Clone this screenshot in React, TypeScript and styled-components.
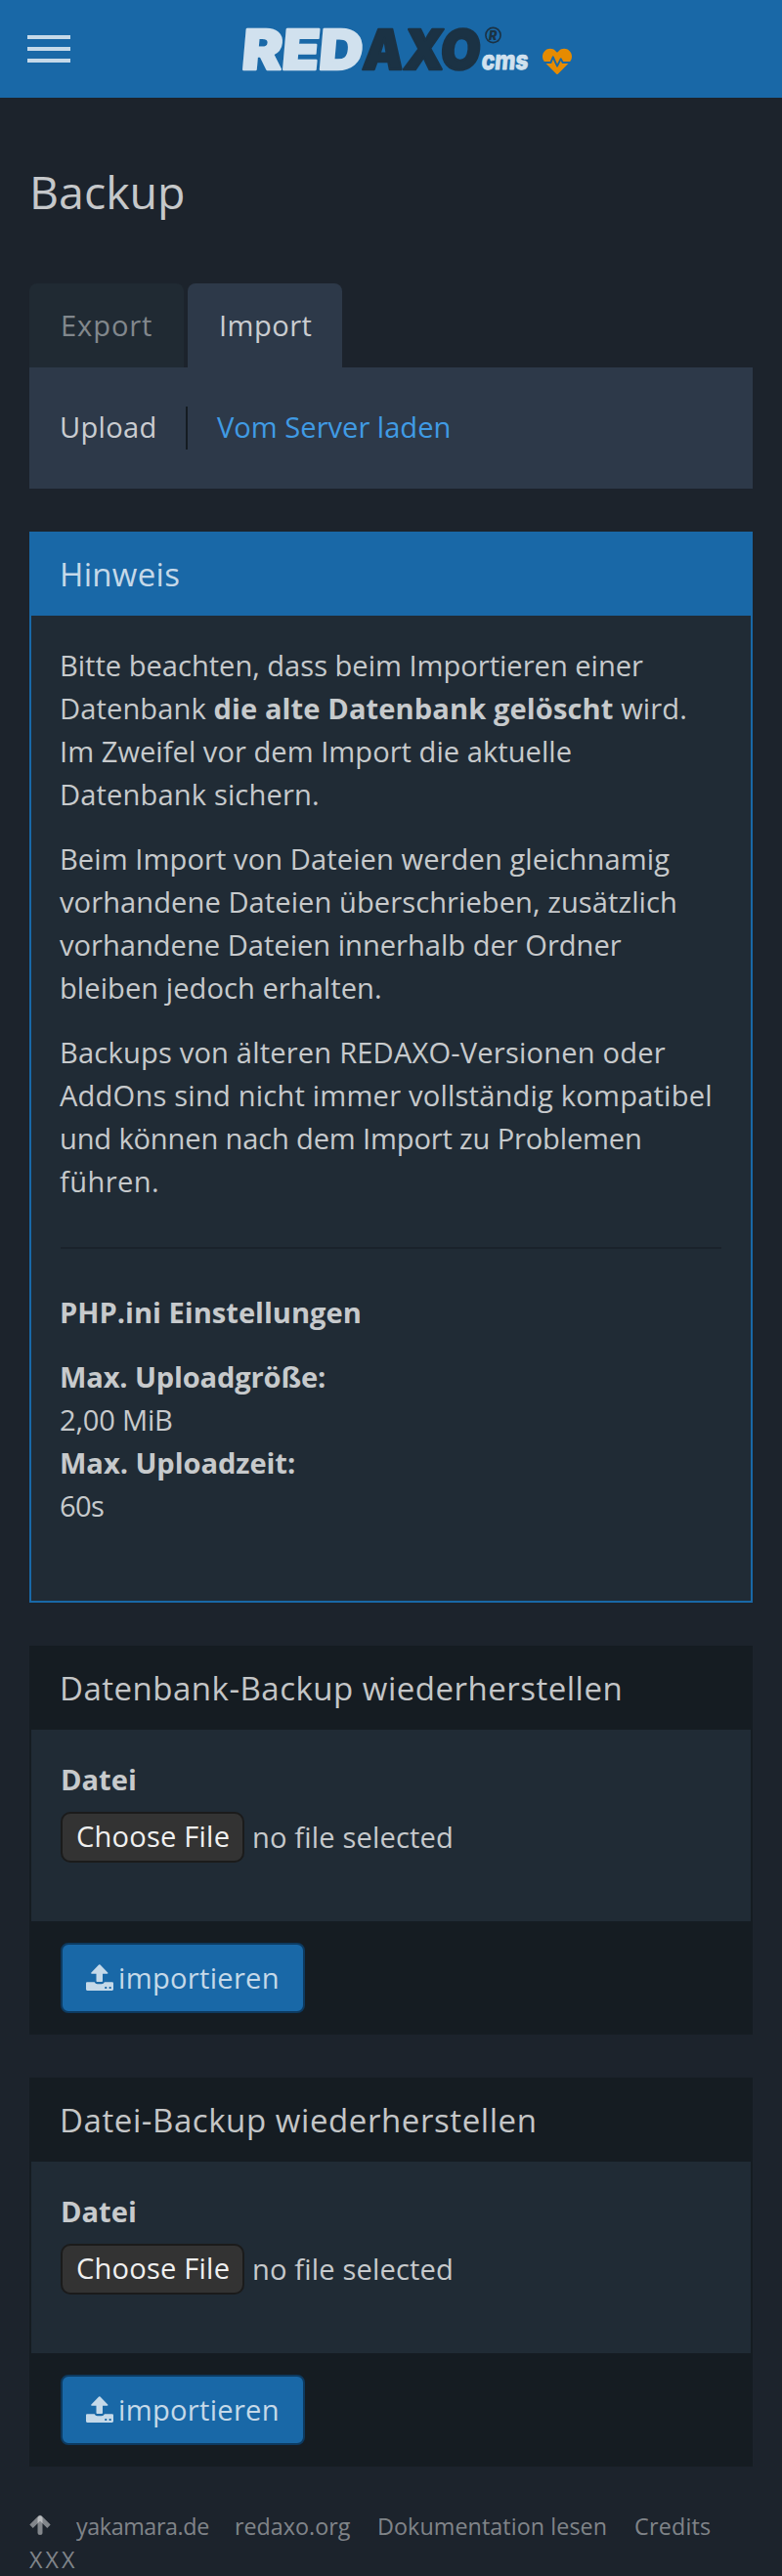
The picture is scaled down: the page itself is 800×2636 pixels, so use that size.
import React from "react";
import styled, { createGlobalStyle } from "styled-components";
import { FaHeartbeat } from "react-icons/fa";

const blue = "#1968a7";
const text = "rgba(255, 255, 255, 0.75)";

const GlobalStyle = createGlobalStyle`
  * { box-sizing: border-box; }
  body {
    margin: 0;
    background: #1c232c;
    color: ${text};
    font: 29.1px/44px "Open Sans", "Noto Sans", sans-serif;
  }
`;

const Page = styled.div`
  width: 800px;
  height: 2636px;
  overflow: hidden;
`;

const Header = styled.header`
  display: flex;
  align-items: center;
  height: 100px;
  padding-left: 28px;
  background: ${blue};
`;

const Burger = styled.button`
  display: flex;
  flex-direction: column;
  gap: 8px;
  width: 44px;
  padding: 0;
  border: 0;
  background: none;
`;

const Bar = styled.span`
  height: 4px;
  background: ${text};
`;

const Logo = styled.svg`
  display: block;
  width: 300px;
  height: 100px;
  margin-left: 173px;
  overflow: visible;
`;

const Health = styled(FaHeartbeat)`
  width: 30px;
  height: 30px;
  margin: 26px 0 0 10px;
  color: #e68b00;
`;

const Main = styled.main`
  padding: 0 30px;
`;

const Title = styled.h1`
  margin: 63px 0 61px;
  font-size: 46.5px;
  line-height: 66px;
  font-weight: 400;
`;

const Tabs = styled.nav`
  display: flex;
  gap: 4px;
`;

const Tab = styled.a<{ $active?: boolean }>`
  width: 158px;
  height: 86px;
  padding: 21px 0 0 32px;
  border-radius: 8px 8px 0 0;
  background: ${(p) => (p.$active ? "#2d3949" : "#202a33")};
  color: ${(p) => (p.$active ? text : "rgba(255, 255, 255, 0.45)")};
`;

const SubNav = styled.nav`
  display: flex;
  height: 124px;
  margin-bottom: 44px;
  padding: 40px 0 0 31px;
  background: #2d3949;
`;

const SubItem = styled.a`
  width: 131px;
  height: 44px;
  border-right: 2px solid #151c22;
  line-height: 42px;
`;

const SubLink = styled.a`
  margin-left: 30px;
  color: #409be4;
  line-height: 42px;
`;

const Track = styled.span<{ $spacing: number }>`
  letter-spacing: ${(p) => p.$spacing}px;
  white-space: nowrap;
`;

const Panel = styled.section<{ $info?: boolean }>`
  margin-bottom: 44px;
  border: 2px solid ${(p) => (p.$info ? blue : "#151c22")};
  background: #202b35;
`;

const PanelHeading = styled.h2<{ $info?: boolean }>`
  height: 84px;
  margin: 0;
  padding: 20px 0 0 29px;
  background: ${(p) => (p.$info ? blue : "#151c22")};
  font-size: 33px;
  line-height: 44px;
  font-weight: 400;
`;

const PanelBody = styled.div`
  padding: 29px 30px 31px 29px;
`;

const Paragraph = styled.p`
  margin: 0 0 22px;
`;

const Rule = styled.hr`
  margin: 45px 0 43px 1px;
  border: 0;
  border-top: 2px solid #1a222b;
`;

const Settings = styled.dl`
  margin: 0 0 44px;
`;

const Term = styled.dt`
  font-weight: 700;
`;

const Value = styled.dd`
  margin: 0;
`;

const FormBody = styled.div`
  height: 196px;
  padding: 29px 30px;
`;

const Label = styled.label`
  display: block;
  height: 55px;
  font-weight: 700;
`;

const FileRow = styled.div`
  display: flex;
  align-items: center;
  gap: 8px;
  line-height: 43px;
`;

const FileButton = styled.span`
  width: 188px;
  height: 52px;
  padding: 2px 0 0 14px;
  border: 2px solid #1b1b1b;
  border-radius: 10px;
  background: #333;
  color: #f0f0f0;
`;

const PanelFooter = styled.footer`
  height: 114px;
  padding: 22px 30px;
  background: #151c22;
`;

const ImportButton = styled.button`
  display: flex;
  align-items: center;
  gap: 5px;
  width: 250px;
  height: 72px;
  padding: 0 0 1px 24px;
  border: 2px solid #0d3a60;
  border-radius: 8px;
  background: ${blue};
  color: ${text};
  font: inherit;
`;

const PageFooter = styled.footer`
  display: flex;
  flex-wrap: wrap;
  padding: 0 30px;
  font-size: 23.3px;
  line-height: 34px;
  color: rgba(255, 255, 255, 0.45);
`;

const FootLink = styled.a<{ $width: number }>`
  width: ${(p) => p.$width}px;
`;

type Line = [string, number];

const Lines = ({ items }: { items: Line[] }) => (
  <>
    {items.map(([line, spacing], i) => (
      <React.Fragment key={line}>
        {i > 0 && <br />}
        <Track $spacing={spacing}>{line}</Track>
      </React.Fragment>
    ))}
  </>
);

const UploadIcon = () => (
  <svg width="28" height="28" viewBox="0 0 28 28" fill="currentColor">
    <path d="M13.1.6a1 1 0 0 1 1.4 0l7.7 7.8c.6.7.2 1.4-.6 1.4H17v7.1c0 .7-.5 1.1-1.1 1.1h-4.300c-.6 0-1.1-.4-1.1-1.1V9.800H6c-.9 0-1.200-.8-.6-1.400z" />
    <path
      fillRule="evenodd"
      d="M1.300 18.300h7.400c.7 1.200 1.500 1.900 2.900 1.900h4.300c1.400 0 2.300-.7 3-1.900h7.700c.8 0 1.400.5 1.400 1.300v6c0 .8-.6 1.400-1.400 1.400H1.300C.500 27 0 26.400 0 25.600v-6c0-.8.5-1.300 1.300-1.300zM19.300 23h1.900v1.900h-1.900zM23.700 23h1.900v1.900h-1.900z"
    />
  </svg>
);

const ArrowIcon = () => (
  <svg width="22" height="21" viewBox="0 0 22 21" fill="none" stroke="currentColor" strokeWidth="5">
    <path d="M2 12.200 11 3.300l9 8.900" strokeLinejoin="round" strokeWidth="4.800" />
    <path d="M11 4v14.500" strokeLinecap="round" />
  </svg>
);

const RestorePanel = ({ title, spacing }: { title: string; spacing: number }) => (
  <Panel>
    <PanelHeading>
      <Track $spacing={spacing}>{title}</Track>
    </PanelHeading>
    <FormBody>
      <Label>Datei</Label>
      <FileRow>
        <FileButton>
          <Track $spacing={0.2}>Choose File</Track>
        </FileButton>
        <Track $spacing={0.15}>no file selected</Track>
      </FileRow>
    </FormBody>
    <PanelFooter>
      <ImportButton>
        <UploadIcon />
        <Track $spacing={0.3}>importieren</Track>
      </ImportButton>
    </PanelFooter>
  </Panel>
);

export default function App() {
  return (
    <Page>
      <GlobalStyle />
      <Header>
        <Burger aria-label="Navigation">
          <Bar />
          <Bar />
          <Bar />
        </Burger>
        <Logo viewBox="0 -20 300 100" fontFamily="Inter" fontWeight={900}>
          <g transform="translate(4.500 0) skewX(-5)" strokeLinejoin="round">
            <g fontSize="56.500" strokeWidth="2.400">
              <text x="1.500" y="50.800" fill="#d1e1ee" stroke="#d1e1ee" textLength="123" lengthAdjust="spacingAndGlyphs">
                RED
              </text>
              <text x="125" y="50.800" fill="#1b3244" stroke="#1b3244" textLength="120" lengthAdjust="spacingAndGlyphs">
                AXO
              </text>
            </g>
            <text x="247" y="51.500" fontSize="27" fill="#d1e1ee" stroke="#d1e1ee" strokeWidth="0.800" textLength="48" lengthAdjust="spacingAndGlyphs" fontWeight={800}>
              cms
            </text>
          </g>
          <circle cx="259.500" cy="16" r="7.600" fill="none" stroke="#1b3244" strokeWidth="1.600" />
          <text x="255" y="20.600" fontSize="12.500" fill="#1b3244" fontStyle="italic">
            R
          </text>
        </Logo>
        <Health />
      </Header>
      <Main>
        <Title>Backup</Title>
        <Tabs>
          <Tab>
            <Track $spacing={0.9}>Export</Track>
          </Tab>
          <Tab $active>
            <Track $spacing={0.45}>Import</Track>
          </Tab>
        </Tabs>
        <SubNav>
          <SubItem>
            <Track $spacing={0.3}>Upload</Track>
          </SubItem>
          <SubLink>Vom Server laden</SubLink>
        </SubNav>

        <Panel $info>
          <PanelHeading $info>
            <Track $spacing={0.3}>Hinweis</Track>
          </PanelHeading>
          <PanelBody>
            <Paragraph>
              <Track $spacing={-0.01}>Bitte beachten, dass beim Importieren einer</Track>
              <br />
              <Track $spacing={0.1}>
                Datenbank <b>die alte Datenbank gelöscht</b> wird.
              </Track>
              <br />
              <Lines
                items={[
                  ["Im Zweifel vor dem Import die aktuelle", 0.03],
                  ["Datenbank sichern.", 0.14],
                ]}
              />
            </Paragraph>
            <Paragraph>
              <Lines
                items={[
                  ["Beim Import von Dateien werden gleichnamig", 0.08],
                  ["vorhandene Dateien überschrieben, zusätzlich", 0.07],
                  ["vorhandene Dateien innerhalb der Ordner", 0],
                  ["bleiben jedoch erhalten.", 0.05],
                ]}
              />
            </Paragraph>
            <Paragraph>
              <Lines
                items={[
                  ["Backups von älteren REDAXO-Versionen oder", 0.18],
                  ["AddOns sind nicht immer vollständig kompatibel", 0.2],
                  ["und können nach dem Import zu Problemen", -0.16],
                  ["führen.", 0.4],
                ]}
              />
            </Paragraph>
            <Rule />
            <Paragraph>
              <b>PHP.ini Einstellungen</b>
            </Paragraph>
            <Settings>
              <Term>
                <Track $spacing={-0.16}>Max. Uploadgröße:</Track>
              </Term>
              <Value>
                <Track $spacing={-0.21}>2,00 MiB</Track>
              </Value>
              <Term>
                <Track $spacing={-0.06}>Max. Uploadzeit:</Track>
              </Term>
              <Value>
                <Track $spacing={-0.64}>60s</Track>
              </Value>
            </Settings>
          </PanelBody>
        </Panel>

        <RestorePanel title="Datenbank-Backup wiederherstellen" spacing={0.5} />
        <RestorePanel title="Datei-Backup wiederherstellen" spacing={0.58} />
      </Main>
      <PageFooter>
        <FootLink $width={48}>
          <ArrowIcon />
        </FootLink>
        <FootLink $width={162}>
          <Track $spacing={-0.4}>yakamara.de</Track>
        </FootLink>
        <FootLink $width={146}>redaxo.org</FootLink>
        <FootLink $width={263}>
          <Track $spacing={0.08}>Dokumentation lesen</Track>
        </FootLink>
        <FootLink $width={90}>
          <Track $spacing={0.23}>Credits</Track>
        </FootLink>
        <FootLink $width={90}>
          <Track $spacing={3}>XXX</Track>
        </FootLink>
      </PageFooter>
    </Page>
  );
}
